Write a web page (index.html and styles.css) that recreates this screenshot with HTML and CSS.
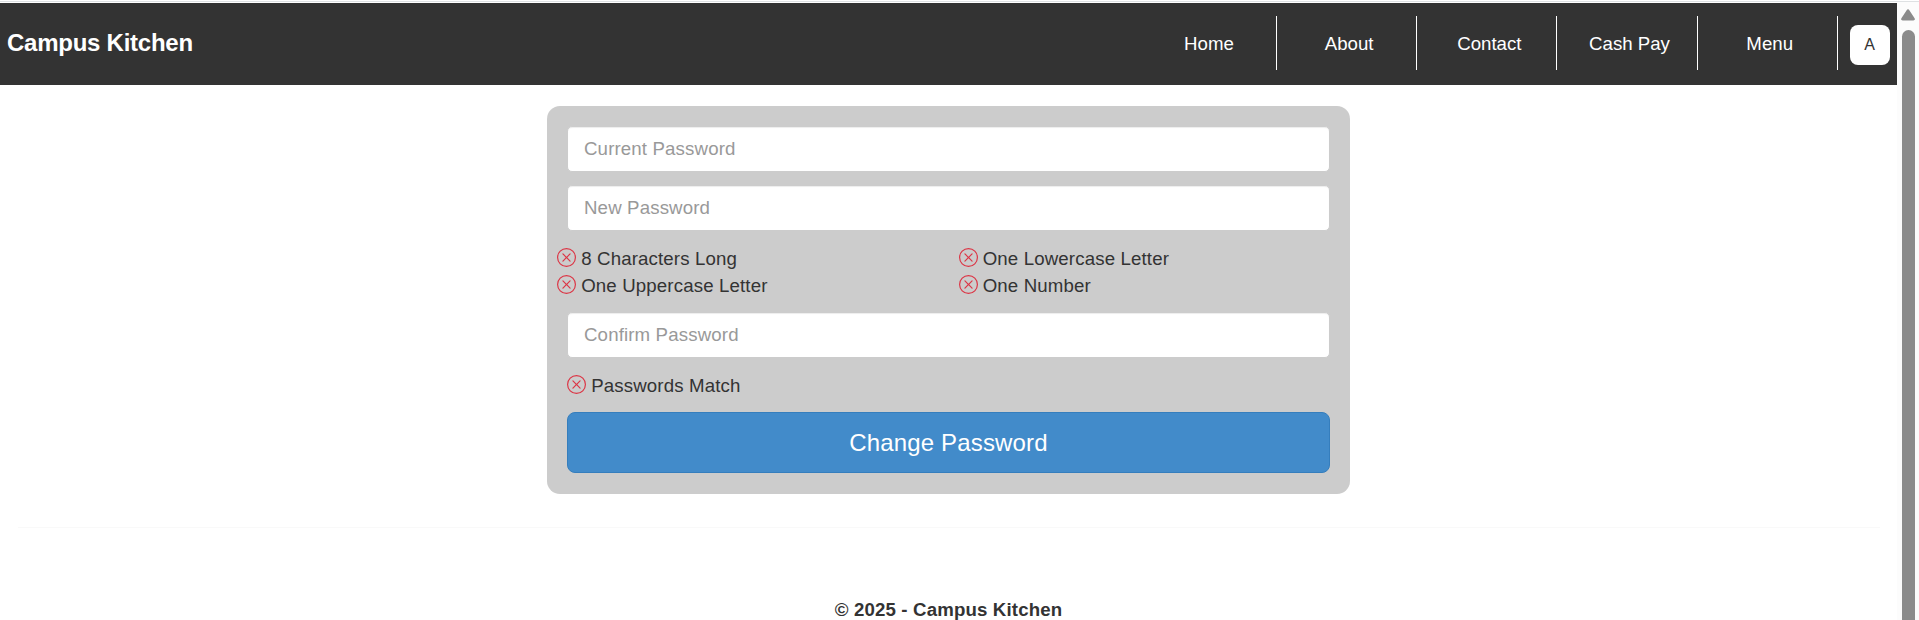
FILE: index.html
```html
<!DOCTYPE html>
<html lang="en">
<head>
<meta charset="utf-8">
<title>Change Password - Campus Kitchen</title>
<link rel="stylesheet" href="styles.css">
</head>
<body>
<svg class="sprite" aria-hidden="true">
  <symbol id="x-circle" viewBox="0 0 16 16">
    <path d="M8 15A7 7 0 1 1 8 1a7 7 0 0 1 0 14m0 1A8 8 0 1 0 8 0a8 8 0 0 0 0 16"/>
    <path d="M4.646 4.646a.5.5 0 0 1 .708 0L8 7.293l2.646-2.647a.5.5 0 0 1 .708.708L8.707 8l2.647 2.646a.5.5 0 0 1-.708.708L8 8.707l-2.646 2.647a.5.5 0 0 1-.708-.708L7.293 8 4.646 5.354a.5.5 0 0 1 0-.708"/>
  </symbol>
</svg>
<div class="window">
  <div class="page">
    <header class="navbar">
      <a class="brand">Campus Kitchen</a>
      <nav class="nav">
        <a class="nav-item">Home</a>
        <a class="nav-item">About</a>
        <a class="nav-item">Contact</a>
        <a class="nav-item">Cash Pay</a>
        <a class="nav-item">Menu</a>
      </nav>
      <button class="avatar">A</button>
    </header>
    <form class="card">
      <input class="field" type="password" placeholder="Current Password">
      <input class="field" type="password" placeholder="New Password">
      <div class="rules">
        <div class="rule"><svg class="icon"><use href="#x-circle"/></svg><span>8 Characters Long</span></div>
        <div class="rule"><svg class="icon"><use href="#x-circle"/></svg><span>One Lowercase Letter</span></div>
        <div class="rule"><svg class="icon"><use href="#x-circle"/></svg><span>One Uppercase Letter</span></div>
        <div class="rule"><svg class="icon"><use href="#x-circle"/></svg><span>One Number</span></div>
      </div>
      <input class="field" type="password" placeholder="Confirm Password">
      <div class="rule match"><svg class="icon"><use href="#x-circle"/></svg><span>Passwords Match</span></div>
      <button class="submit" type="button">Change Password</button>
    </form>
    <hr class="divider">
    <footer class="footer">© 2025 - Campus Kitchen</footer>
  </div>
  <div class="scrollbar">
    <svg class="arrow" viewBox="0 0 14 12"><path d="M7 .3Q7.8.3 8.5 1.4L13.6 9.2Q14.7 11.4 12.3 11.4H1.7Q-.7 11.4.4 9.2L5.5 1.4Q6.2.3 7 .3Z"/></svg>
    <div class="thumb"></div>
  </div>
</div>
</body>
</html>
```
FILE: styles.css
```css
* { box-sizing: border-box; }
body {
  margin: 0;
  height: 620px;
  overflow: hidden;
  background: #fff;
  color: #333;
  font: 18.667px/26.667px "Liberation Sans", Arial, sans-serif;
}
.sprite { display: none; }
.window {
  display: flex;
  height: 620px;
  padding-top: 1px;
}
.page {
  flex: 1;
  min-width: 0;
  padding-top: 1px;
  border-top: 1px solid #dee1e3;
}
.navbar {
  display: flex;
  align-items: flex-start;
  height: 82px;
  padding: 13px 7px 0;
  background: #333;
  color: #fff;
}
.brand {
  margin-top: 10px;
  font-size: 24px;
  font-weight: bold;
  letter-spacing: -.25px;
  line-height: 34px;
}
.nav {
  display: flex;
  gap: 5.2px;
  margin-left: auto;
}
.nav-item {
  width: 135px;
  height: 54px;
  border-right: 1px solid #fff;
  line-height: 56px;
  text-align: center;
}
.avatar {
  width: 40px;
  height: 40px;
  margin: 9px 0 0 12.3px;
  padding: 0 1px 0 0;
  border: 0;
  border-radius: 8px;
  background: #fff;
  color: #333;
  font: 16px/38px "Liberation Sans", Arial, sans-serif;
}
.card {
  display: flex;
  flex-direction: column;
  width: 803px;
  height: 388px;
  margin: 21px auto 0;
  padding: 20px;
  border-radius: 13px;
  background: #ccc;
  letter-spacing: .14px;
}
.field {
  width: 100%;
  height: 46px;
  margin: 0 0 13px;
  padding: 8px 16px;
  border: 1px solid #ccc;
  border-radius: 5px;
  background: #fff;
  box-shadow: inset 0 1px 1px rgba(0, 0, 0, .075);
  color: #555;
  font: inherit;
  letter-spacing: inherit;
}
.field::placeholder { color: #999; }
.rules {
  display: grid;
  grid-template-columns: 401.5px 1fr;
  margin: 1px -10px 13px;
}
.rule {
  display: flex;
  gap: 5.2px;
  height: 27px;
  line-height: 28px;
}
.icon {
  width: 19px;
  height: 19px;
  margin-top: 3px;
  fill: #dc3545;
}
.match { margin: 1px 0 13px; }
.submit {
  height: 61px;
  padding: 0;
  border: 1px solid #357ebd;
  border-radius: 8px;
  background: #428bca;
  color: #fff;
  font: 24px/32px "Liberation Sans", Arial, sans-serif;
  letter-spacing: .16px;
}
.divider {
  height: 1px;
  margin: 33px 17px 0 18px;
  border: 0;
  background: #f9f9f9;
}
.footer {
  margin-top: 69px;
  font-weight: bold;
  letter-spacing: .15px;
  text-align: center;
}
.scrollbar {
  display: flex;
  flex-direction: column;
  width: 22px;
  padding: 7px 4px 0;
  border-top: 1px solid #dee1e3;
  background: #fcfcfc;
}
.arrow {
  width: 14px;
  height: 12px;
  fill: #8b8b8b;
}
.thumb {
  flex: 1;
  width: 13px;
  margin: 9px 0 0 1px;
  border-radius: 7px 7px 0 0;
  background: #8b8b8b;
}
```
